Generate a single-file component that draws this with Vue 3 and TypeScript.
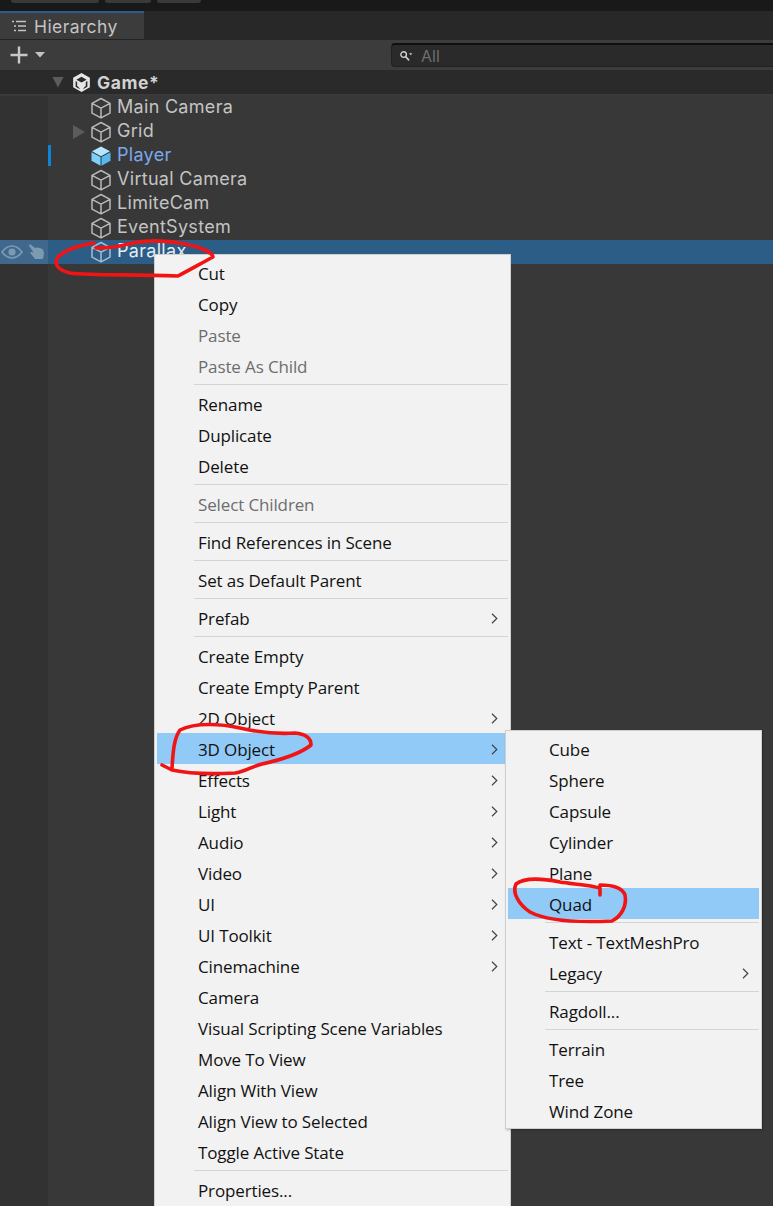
<script setup lang="ts">
interface Row { name: string; kind?: string; arrow?: boolean }
const rows: Row[] = [
  { name: 'Main Camera' },
  { name: 'Grid', arrow: true },
  { name: 'Player', kind: 'prefab' },
  { name: 'Virtual Camera' },
  { name: 'LimiteCam' },
  { name: 'EventSystem' },
  { name: 'Parallax', kind: 'selected' },
]
interface Item { t?: string; off?: boolean; sub?: boolean; hot?: boolean }
const mainMenu: Item[] = [
  { t: 'Cut' }, { t: 'Copy' }, { t: 'Paste', off: true }, { t: 'Paste As Child', off: true }, {},
  { t: 'Rename' }, { t: 'Duplicate' }, { t: 'Delete' }, {},
  { t: 'Select Children', off: true }, {},
  { t: 'Find References in Scene' }, {},
  { t: 'Set as Default Parent' }, {},
  { t: 'Prefab', sub: true }, {},
  { t: 'Create Empty' }, { t: 'Create Empty Parent' },
  { t: '2D Object', sub: true }, { t: '3D Object', sub: true, hot: true },
  { t: 'Effects', sub: true }, { t: 'Light', sub: true }, { t: 'Audio', sub: true }, { t: 'Video', sub: true },
  { t: 'UI', sub: true }, { t: 'UI Toolkit', sub: true }, { t: 'Cinemachine', sub: true },
  { t: 'Camera' }, { t: 'Visual Scripting Scene Variables' }, { t: 'Move To View' },
  { t: 'Align With View' }, { t: 'Align View to Selected' }, { t: 'Toggle Active State' }, {},
  { t: 'Properties...' },
]
const subMenu: Item[] = [
  { t: 'Cube' }, { t: 'Sphere' }, { t: 'Capsule' }, { t: 'Cylinder' }, { t: 'Plane' }, { t: 'Quad', hot: true }, {},
  { t: 'Text - TextMeshPro' }, { t: 'Legacy', sub: true }, {},
  { t: 'Ragdoll...' }, {},
  { t: 'Terrain' }, { t: 'Tree' }, { t: 'Wind Zone' },
]
</script>

<template>
  <div class="page">
    <div class="topbar">
      <span class="stub s1"></span><span class="stub s2"></span><span class="stub s3"></span>
    </div>
    <div class="tabbar">
      <div class="tab">
        <svg class="tabicon" width="16" height="12" viewBox="0 0 16 12" fill="none" stroke="#c4c4c4" stroke-width="1.4">
          <path d="M1 1.500h2M5 1.500h10M3 6h2M7 6h8M3 10.500h2M7 10.500h8" />
        </svg>
        <span>Hierarchy</span>
      </div>
    </div>
    <div class="toolbar">
      <div class="plus">
        <svg width="36" height="20" viewBox="0 0 36 20">
          <path d="M9 1.500v17M0.500 10h17" stroke="#c8c8c8" stroke-width="2.400" fill="none" />
          <path d="M25 7h10l-5 5.500z" fill="#c4c4c4" />
        </svg>
      </div>
      <div class="search">
        <svg width="14" height="12" viewBox="0 0 14 12" fill="none">
          <circle cx="4.600" cy="4.600" r="2.800" stroke="#d0d0d0" stroke-width="1.400" />
          <path d="M6.800 6.800l3.200 3.600" stroke="#d0d0d0" stroke-width="1.600" />
          <path d="M10 3.200h3.400l-1.700 2z" fill="#d0d0d0" />
        </svg>
        <span>All</span>
      </div>
    </div>
    <div class="scene">
      <svg class="triangle" width="12" height="12" viewBox="0 0 12 12"><path d="M.5 1h11L6 11.500z" fill="#5c5c5c" /></svg>
      <svg class="unity" width="19" height="21" viewBox="0 0 20 21">
        <path d="M10 .5l8.800 5v10L10 20.500l-8.800-5v-10z" fill="#e6e6e6" />
        <path d="M10 4.400L4.600 7.500 10 10.600l5.400-3.100zM3.800 9v6l4.600 2.600-.9-1.700L5.400 14V10zM16.200 9v6l-4.600 2.600.9-1.700 2-1.900V10z" fill="#2a2a2a" />
      </svg>
      <span class="scene-name">Game*</span>
    </div>
    <div class="tree">
      <div v-for="r in rows" :key="r.name" class="row" :class="r.kind">
        <div class="gutter">
          <template v-if="r.kind === 'selected'">
            <svg class="eye" width="22" height="14" viewBox="0 0 22 14">
              <path d="M1 7c3-4 6.200-6 10-6s7 2 10 6c-3 4-6.200 6-10 6S4 11 1 7z" fill="none" stroke="#7d9ab3" stroke-width="1.600" />
              <circle cx="11" cy="7" r="3.600" fill="#7d9ab3" />
            </svg>
            <svg class="hand" width="18" height="16" viewBox="0 0 18 16">
              <path d="M1.500 1L3.500.5 8 4l2-.5 3 .5 3 1.500 1 3.500-1 6H8L4 10 3 8l3.500.5z" fill="#7d9ab3" />
            </svg>
          </template>
          <span v-if="r.kind === 'prefab'" class="mark"></span>
        </div>
        <svg v-if="r.arrow" class="arrow" width="12" height="14" viewBox="0 0 12 14"><path d="M0 0l12 7-12 7z" fill="#5c5c5c" /></svg>
        <svg class="cube" width="22" height="22" viewBox="0 0 22 22">
          <template v-if="r.kind === 'prefab'">
            <path d="M11 1.500l9 4.800-9 4.900-9-4.900z" fill="#b5e6ff" />
            <path d="M1.500 7.300l9 4.800v8.700l-9-5z" fill="#7cd0fa" />
            <path d="M20.500 7.300l-9 4.800v8.700l9-5z" fill="#59b9ee" />
          </template>
          <path v-else d="M11 1.500l9 4.800v9.800l-9 4.700-9-4.700V6.300zM2 6.300l9 4.900 9-4.900M11 11.200v9.400" fill="none" :stroke="r.kind === 'selected' ? '#a9bccd' : '#b8b8b8'" stroke-width="1.500" stroke-linejoin="round" />
        </svg>
        <span class="label">{{ r.name }}</span>
      </div>
      <div class="gutter-fill"></div>
    </div>

    <div class="menu main-menu">
      <template v-for="(m, i) in mainMenu" :key="i">
        <div v-if="!m.t" class="sep"></div>
        <div v-else class="item" :class="{ off: m.off, hot: m.hot }">
          <span>{{ m.t }}</span>
          <svg v-if="m.sub" class="chev" width="7" height="11" viewBox="0 0 7 11"><path d="M1 .8l4.800 4.700L1 10.200" fill="none" stroke="#444" stroke-width="1.200" /></svg>
        </div>
      </template>
    </div>

    <div class="menu sub-menu">
      <template v-for="(m, i) in subMenu" :key="i">
        <div v-if="!m.t" class="sep"></div>
        <div v-else class="item" :class="{ hot: m.hot }">
          <span>{{ m.t }}</span>
          <svg v-if="m.sub" class="chev" width="7" height="11" viewBox="0 0 7 11"><path d="M1 .8l4.800 4.700L1 10.200" fill="none" stroke="#444" stroke-width="1.200" /></svg>
        </div>
      </template>
    </div>

    <svg class="ink" width="773" height="1206" viewBox="0 0 773 1206" fill="none" stroke="#f01414" stroke-width="3.600" stroke-linecap="round" stroke-linejoin="round">
      <path d="M94 243C80 245 65 250 58 257C53 264 58 270 70 273C95 276 125 274 178 276C186 272 200 264 213 257C212 252 200 247 185 244C165 240 145 240 128 244C115 248 105 248 96 248" />
      <path d="M162 765L172 770C190 774 215 774 235 773C245 772 250 767 262 764C280 760 300 754 311 745C311 738 306 734 295 733C280 734 262 733 240 728C222 724 196 722 180 730C174 738 173 752 172 768" />
      <path d="M600 895L600 888C590 885 572 884 560 882C545 879 525 877 516 884C512 892 518 904 530 912C545 920 570 923 612 921C622 916 627 905 625 895C622 887 612 885 600 885" />
    </svg>
  </div>
</template>

<style>
html, body { margin: 0; background: #383838; }
</style>

<style scoped>
.page {
  position: relative;
  width: 773px;
  height: 1206px;
  overflow: hidden;
  background: #383838;
  font-family: Inter, "Liberation Sans", sans-serif;
}
.topbar {
  height: 11px;
  background: #191919;
  display: flex;
  align-items: flex-start;
  padding-left: 11px;
  gap: 6px;
}
.stub { height: 3px; background: #3a3a3a; border-radius: 0 0 3px 3px; }
.s1 { width: 88px; }
.s2 { width: 46px; }
.s3 { width: 44px; }
.tabbar { height: 29px; background: #282828; }
.tab {
  width: 144px;
  height: 29px;
  box-sizing: border-box;
  background: #3c3c3c;
  border-top: 2px solid #2c5d87;
  border-bottom: 1px solid #232323;
  display: flex;
  align-items: center;
  gap: 7px;
  padding-left: 11px;
  color: #c4c4c4;
  font-size: 17.5px;
  letter-spacing: 0.4px;
}
.toolbar {
  background: #3c3c3c;
  display: flex;
  align-items: center;
  box-sizing: border-box;
  height: 30px;
  padding-left: 10px;
}
.plus { width: 381px; display: flex; align-items: center; }
.search {
  flex: 1;
  height: 24px;
  box-sizing: border-box;
  margin-right: -10px;
  background: #2a2a2a;
  border: 1px solid #212121;
  border-top: 2px solid #0f0f0f;
  border-radius: 4px 0 0 4px;
  display: flex;
  align-items: center;
  gap: 8px;
  padding-left: 7px;
  color: #6e6e6e;
  font-size: 16px;
}
.scene {
  height: 26px;
  background: #2a2a2a;
  border-bottom: 2px solid #3a3a3a;
  box-sizing: border-box;
  display: flex;
  align-items: center;
  padding-left: 52px;
  color: #d2d2d2;
  font-size: 17.5px;
  font-weight: 700;
  letter-spacing: 0.6px;
}
.triangle { margin-right: 8px; }
.scene-name { margin-left: 6px; }
.tree { display: flex; flex-direction: column; position: relative; }
.row {
  height: 24px;
  display: flex;
  align-items: center;
  position: relative;
  color: #c4c4c4;
  font-size: 18px;
  letter-spacing: 0.3px;
}
.label { margin-bottom: 4px; }
.gutter {
  width: 48px;
  height: 24px;
  flex: none;
  background: #323232;
  display: flex;
  align-items: center;
  position: relative;
}
.mark { position: absolute; right: -3px; top: 1px; width: 3px; height: 21px; background: #0d84d8; }
.row.prefab .label { color: #7ba8ec; }
.row.selected { background: #2c5d87; color: #e4ecf2; }
.row.selected .gutter { background: #40688c; }
.eye { margin-left: 1px; }
.hand { margin-left: 4px; }
.arrow { position: absolute; left: 73px; top: 5px; }
.cube { margin-left: 42px; margin-right: 5px; flex: none; }
.gutter-fill { width: 48px; height: 942px; background: #323232; }
.menu {
  position: absolute;
  box-sizing: border-box;
  background: #f2f2f2;
  border: 1px solid #cfcfcf;
  padding: 2px;
  font-family: "Open Sans", "Liberation Sans", sans-serif;
  font-size: 17px;
  color: #111;
}
.main-menu { left: 154px; top: 254px; width: 357px; height: 990px; padding-left: 2px; }
.sub-menu { left: 505px; top: 730px; width: 257px; height: 399px; box-shadow: 1px 1px 2px rgba(0, 0, 0, 0.25); }
.item {
  height: 31px;
  box-sizing: border-box;
  padding: 2px 10px 0 41px;
  display: flex;
  align-items: center;
  justify-content: space-between;
  white-space: nowrap;
  letter-spacing: -0.13px;
}
.sub-menu .item { padding-right: 10px; }
.item.off { color: #6d6d6d; }
.item.hot { background: #91c9f7; }
.sep { height: 7px; display: flex; align-items: center; padding-left: 37px; padding-right: 0; }
.sep::after { content: ""; flex: 1; height: 1px; background: #d4d4d4; }
.ink { position: absolute; left: 0; top: 0; pointer-events: none; }
</style>
